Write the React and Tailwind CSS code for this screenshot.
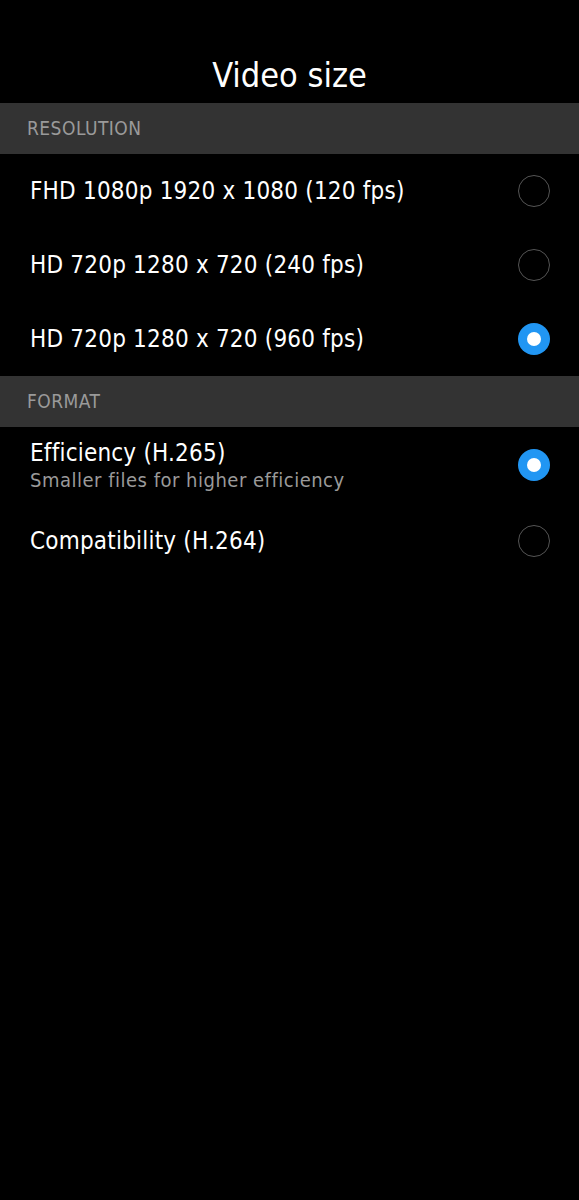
import React, { useState } from 'react';

const font = { fontFamily: '"DejaVu Sans Condensed", "DejaVu Sans", "Liberation Sans", sans-serif' };

const Radio = ({ checked }) =>
  checked ? (
    <div className="w-8 h-8 rounded-full bg-[#2196f3] flex items-center justify-center shrink-0">
      <div className="w-[14px] h-[14px] rounded-full bg-white" />
    </div>
  ) : (
    <div className="w-8 h-8 rounded-full border-[1.5px] border-[#555] shrink-0" />
  );

const SectionHeader = ({ children }) => (
  <div className="h-[51px] bg-[#333333] flex items-center px-[27px] text-[19px] text-[#9a9a9a] tracking-wide">
    {children}
  </div>
);

const Row = ({ title, subtitle, checked, onClick, height = 'h-[74px]' }) => (
  <div onClick={onClick} className={`${height} flex items-center justify-between pl-[30px] pr-[29px] cursor-pointer`}>
    <div className="flex flex-col">
      <span className="text-[24px] text-white leading-tight tracking-[0.2px]">{title}</span>
      {subtitle && <span className="text-[20px] text-[#9a9a9a] leading-tight tracking-[0.5px]">{subtitle}</span>}
    </div>
    <Radio checked={checked} />
  </div>
);

const resolutions = [
  'FHD 1080p 1920 x 1080 (120 fps)',
  'HD 720p 1280 x 720 (240 fps)',
  'HD 720p 1280 x 720 (960 fps)',
];

export default function App() {
  const [res, setRes] = useState(2);
  const [format, setFormat] = useState(0);

  return (
    <div className="w-[579px] h-[1200px] bg-black" style={font}>
      <div className="h-[103px] flex items-center justify-center pt-[54px] pb-[6px]">
        <h1 className="text-[34px] text-white">Video size</h1>
      </div>
      <SectionHeader>RESOLUTION</SectionHeader>
      {resolutions.map((r, i) => (
        <Row key={r} title={r} checked={res === i} onClick={() => setRes(i)} />
      ))}
      <SectionHeader>FORMAT</SectionHeader>
      <Row
        title="Efficiency (H.265)"
        subtitle="Smaller files for higher efficiency"
        checked={format === 0}
        onClick={() => setFormat(0)}
        height="h-[76px]"
      />
      <Row title="Compatibility (H.264)" checked={format === 1} onClick={() => setFormat(1)} height="h-[76px]" />
    </div>
  );
}
